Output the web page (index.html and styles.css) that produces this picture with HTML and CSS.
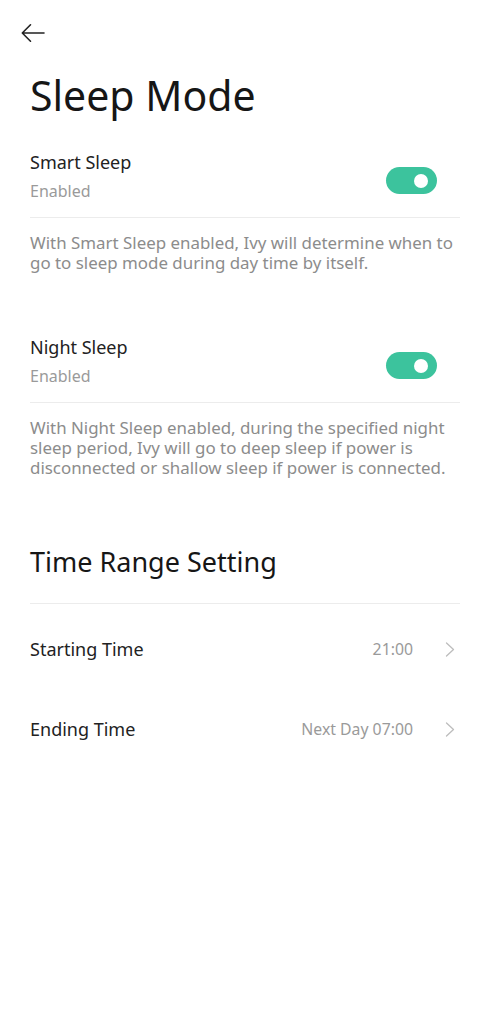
FILE: index.html
```html
<!DOCTYPE html>
<html lang="en">
<head>
<meta charset="utf-8">
<title>Sleep Mode</title>
<link rel="stylesheet" href="styles.css">
</head>
<body>
<div class="page">
  <div class="topbar">
    <svg class="back" width="24" height="20" viewBox="0 0 24 20" fill="none" stroke="#222" stroke-width="1.6" stroke-linecap="round" stroke-linejoin="round">
      <path d="M23 10H1.5M9.5 1.8L1.3 10l8.2 8.2"/>
    </svg>
  </div>
  <h1 class="title">Sleep Mode</h1>

  <section class="setting first">
    <div class="setting-row">
      <div class="setting-text">
        <div class="setting-name">Smart Sleep</div>
        <div class="setting-state">Enabled</div>
      </div>
      <div class="toggle on"><span class="knob"></span></div>
    </div>
    <p class="desc">With Smart Sleep enabled, Ivy will determine when to go to sleep mode during day time by itself.</p>
  </section>

  <section class="setting second">
    <div class="setting-row">
      <div class="setting-text">
        <div class="setting-name">Night Sleep</div>
        <div class="setting-state">Enabled</div>
      </div>
      <div class="toggle on"><span class="knob"></span></div>
    </div>
    <p class="desc">With Night Sleep enabled, during the specified night sleep period, Ivy will go to deep sleep if power is disconnected or shallow sleep if power is connected.</p>
  </section>

  <h2 class="subtitle">Time Range Setting</h2>
  <div class="list">
    <div class="list-row">
      <span class="list-label">Starting Time</span>
      <span class="list-value">21:00</span>
      <svg class="chev" width="10" height="15" viewBox="0 0 10 15" fill="none" stroke="#bdbdbd" stroke-width="1.3" stroke-linecap="round" stroke-linejoin="round"><path d="M1.5 1l7 6.5-7 6.5"/></svg>
    </div>
    <div class="list-row">
      <span class="list-label">Ending Time</span>
      <span class="list-value">Next Day 07:00</span>
      <svg class="chev" width="10" height="15" viewBox="0 0 10 15" fill="none" stroke="#bdbdbd" stroke-width="1.3" stroke-linecap="round" stroke-linejoin="round"><path d="M1.5 1l7 6.5-7 6.5"/></svg>
    </div>
  </div>
</div>
</body>
</html>
```
FILE: styles.css
```css
html, body {
  margin: 0;
  padding: 0;
  background: #fff;
}
body {
  font-family: "Noto Sans", "Open Sans", sans-serif;
  color: #1e1e1e;
}
.page {
  padding: 0 30px;
}
.topbar {
  height: 70px;
  box-sizing: border-box;
  padding-top: 23px;
  margin-left: -9px;
}
.back {
  display: block;
}
.title {
  margin: 0;
  font-size: 41px;
  line-height: 50px;
  font-weight: 400;
  color: #161616;
}
.setting.first {
  padding-top: 30px;
}
.setting.second {
  padding-top: 62px;
}
.setting-row {
  display: flex;
  align-items: flex-start;
  justify-content: space-between;
  padding-bottom: 15px;
  border-bottom: 1px solid #ececec;
}
.setting-name {
  font-size: 18px;
  line-height: 24px;
  color: #222;
}
.setting-state {
  margin-top: 6px;
  font-size: 16px;
  line-height: 22px;
  color: #9a9a9a;
}
.toggle {
  width: 51px;
  height: 27px;
  border-radius: 14px;
  background: #3cc39d;
  margin-top: 17px;
  margin-right: 23px;
  display: flex;
  align-items: center;
  justify-content: flex-end;
  padding-right: 9px;
  box-sizing: border-box;
}
.knob {
  width: 14px;
  height: 14px;
  border-radius: 50%;
  background: #fff;
}
.desc {
  margin: 0;
  padding-top: 15px;
  font-size: 16.9px;
  line-height: 20px;
  color: #8c8c8c;
}
.subtitle {
  margin: 0;
  padding-top: 67px;
  padding-bottom: 24px;
  border-bottom: 1px solid #ececec;
  font-size: 27px;
  line-height: 34px;
  font-weight: 400;
  color: #161616;
}
.list {
  padding-top: 5px;
}
.list-row {
  display: flex;
  align-items: center;
  height: 80px;
}
.list-label {
  flex: 1;
  font-size: 18px;
  line-height: 24px;
  color: #222;
}
.list-value {
  font-size: 15.8px;
  line-height: 22px;
  color: #9a9a9a;
}
.chev {
  display: block;
  margin-left: 32px;
  margin-right: 5px;
}
```
